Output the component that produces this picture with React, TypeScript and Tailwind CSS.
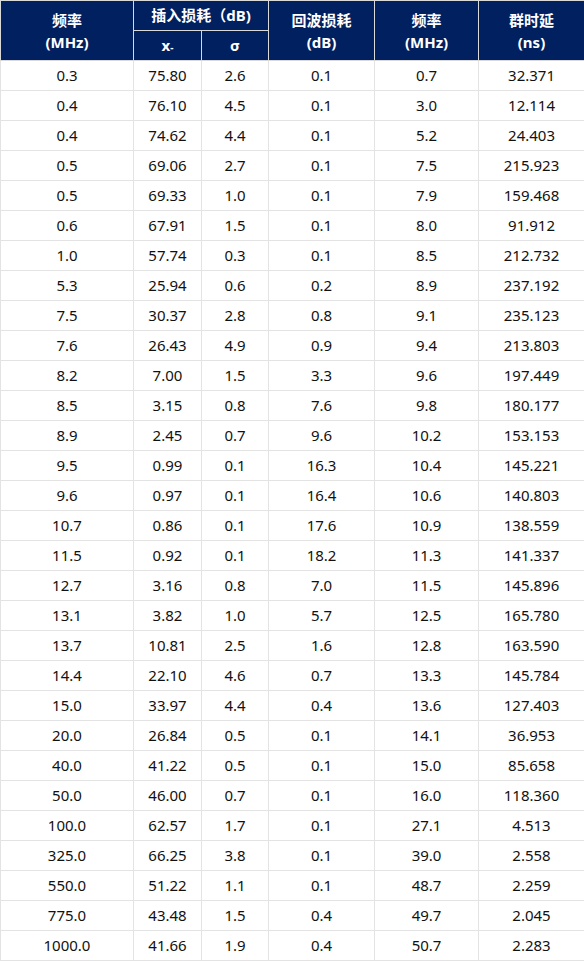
const rows: string[][] = [
  ['0.3', '75.80', '2.6', '0.1', '0.7', '32.371'],
  ['0.4', '76.10', '4.5', '0.1', '3.0', '12.114'],
  ['0.4', '74.62', '4.4', '0.1', '5.2', '24.403'],
  ['0.5', '69.06', '2.7', '0.1', '7.5', '215.923'],
  ['0.5', '69.33', '1.0', '0.1', '7.9', '159.468'],
  ['0.6', '67.91', '1.5', '0.1', '8.0', '91.912'],
  ['1.0', '57.74', '0.3', '0.1', '8.5', '212.732'],
  ['5.3', '25.94', '0.6', '0.2', '8.9', '237.192'],
  ['7.5', '30.37', '2.8', '0.8', '9.1', '235.123'],
  ['7.6', '26.43', '4.9', '0.9', '9.4', '213.803'],
  ['8.2', '7.00', '1.5', '3.3', '9.6', '197.449'],
  ['8.5', '3.15', '0.8', '7.6', '9.8', '180.177'],
  ['8.9', '2.45', '0.7', '9.6', '10.2', '153.153'],
  ['9.5', '0.99', '0.1', '16.3', '10.4', '145.221'],
  ['9.6', '0.97', '0.1', '16.4', '10.6', '140.803'],
  ['10.7', '0.86', '0.1', '17.6', '10.9', '138.559'],
  ['11.5', '0.92', '0.1', '18.2', '11.3', '141.337'],
  ['12.7', '3.16', '0.8', '7.0', '11.5', '145.896'],
  ['13.1', '3.82', '1.0', '5.7', '12.5', '165.780'],
  ['13.7', '10.81', '2.5', '1.6', '12.8', '163.590'],
  ['14.4', '22.10', '4.6', '0.7', '13.3', '145.784'],
  ['15.0', '33.97', '4.4', '0.4', '13.6', '127.403'],
  ['20.0', '26.84', '0.5', '0.1', '14.1', '36.953'],
  ['40.0', '41.22', '0.5', '0.1', '15.0', '85.658'],
  ['50.0', '46.00', '0.7', '0.1', '16.0', '118.360'],
  ['100.0', '62.57', '1.7', '0.1', '27.1', '4.513'],
  ['325.0', '66.25', '3.8', '0.1', '39.0', '2.558'],
  ['550.0', '51.22', '1.1', '0.1', '48.7', '2.259'],
  ['775.0', '43.48', '1.5', '0.4', '49.7', '2.045'],
  ['1000.0', '41.66', '1.9', '0.4', '50.7', '2.283'],
];

const widths = ['w-[133px]', 'w-[68px]', 'w-[67px]', 'w-[106px]', 'w-[104px]', 'w-[106px]'];

export default function App() {
  return (
    <div
      className="w-[584px] bg-white text-[15px] text-[#111]"
      style={{ fontFamily: '"Noto Sans", "Noto Sans CJK SC", sans-serif' }}
    >
      <table className="w-[584px] table-fixed border-collapse">
        <colgroup>
          {widths.map((w, i) => (
            <col key={i} className={w} />
          ))}
        </colgroup>
        <thead className="bg-[#002060] font-bold text-white">
          <tr className="h-[30px]">
            <th rowSpan={2} className="border border-[#d9d9d9] leading-[22px] font-bold">
              频率
              <br />
              (MHz)
            </th>
            <th colSpan={2} className="border border-[#d9d9d9] font-bold">
              插入损耗（dB)
            </th>
            <th rowSpan={2} className="border border-[#d9d9d9] leading-[22px] font-bold">
              回波损耗
              <br />
              (dB)
            </th>
            <th rowSpan={2} className="border border-[#d9d9d9] leading-[22px] font-bold">
              频率
              <br />
              (MHz)
            </th>
            <th rowSpan={2} className="border border-[#d9d9d9] leading-[22px] font-bold">
              群时延
              <br />
              (ns)
            </th>
          </tr>
          <tr className="h-[30px]">
            <th className="border border-[#d9d9d9] font-bold">
              x<span className="text-[10px]">-</span>
            </th>
            <th className="border border-[#d9d9d9] font-bold">σ</th>
          </tr>
        </thead>
        <tbody>
          {rows.map((r, i) => (
            <tr key={i} className="h-[30px]">
              {r.map((c, j) => (
                <td key={j} className="border border-[#e3e3e3] p-0 text-center">
                  {c}
                </td>
              ))}
            </tr>
          ))}
        </tbody>
      </table>
    </div>
  );
}
